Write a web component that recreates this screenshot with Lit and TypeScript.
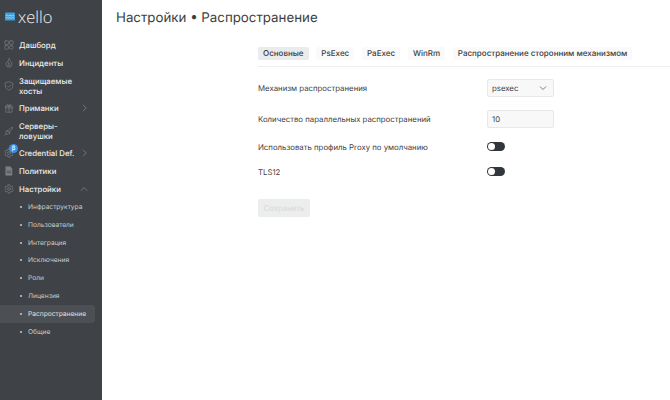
import { LitElement, html, css, svg } from "lit";
import { customElement } from "lit/decorators.js";

const s = (c: unknown) => html`<svg class="ic" viewBox="0 0 12 12" fill="none" stroke="#7c8084" stroke-width="0.8" stroke-linecap="round" stroke-linejoin="round">${c}</svg>`;
const icons: Record<string, unknown> = {
  dash: s(svg`<rect x="1" y="1" width="4.300" height="4.300" rx=".8"/><rect x="6.700" y="1" width="4.300" height="4.300" rx=".8"/><rect x="1" y="6.700" width="4.300" height="4.300" rx=".8"/><rect x="6.700" y="6.700" width="4.300" height="4.300" rx="2.100"/>`),
  fire: s(svg`<path d="M6 1C6.500 3 9.500 4.500 9.500 7.500A3.500 3.500 0 0 1 2.500 7.500C2.500 6 3.300 5 4 4.300C4.300 5 4.800 5.300 5 5.300C5 4 5.200 2.300 6 1Z"/><path d="M6 6.500C6.800 7.300 7.200 8 7 8.800A1.100 1.100 0 0 1 5 8.800C4.800 8 5.300 7.200 6 6.500Z"/>`),
  shield: s(svg`<path d="M6 1L10.500 2.500V6C10.500 8.500 8.500 10.300 6 11C3.500 10.300 1.500 8.500 1.500 6V2.500Z"/><path d="M4 6L5.500 7.500L8 4.800"/>`),
  gift: s(svg`<rect x="1.500" y="4" width="9" height="2" rx=".4"/><path d="M2.300 6V11H9.700V6M6 4V11M6 4C4.500 4 3.300 3.300 3.500 2C3.800 .9 5.500 1.300 6 4C6.500 1.300 8.200 .9 8.500 2C8.700 3.300 7.500 4 6 4Z"/>`),
  server: s(svg`<path d="M2 8L8 2.500L10.500 1.500L9.500 4L4 10ZM2.500 5.500L5 6M6.500 7L6.500 9.500M1 11L2.500 9.500"/>`),
  gear: s(svg`<circle cx="6" cy="6" r="1.700"/><path d="M5 1H7L7.300 2.500L8.600 3.200L10 2.700L11 4.400L9.900 5.400V6.600L11 7.600L10 9.300L8.600 8.800L7.300 9.500L7 11H5L4.700 9.500L3.400 8.800L2 9.300L1 7.600L2.100 6.600V5.400L1 4.400L2 2.700L3.400 3.200L4.700 2.500Z"/>`),
  doc: s(svg`<path d="M2.500 1H7.500L9.500 3V11H2.500Z" fill="#7c8084"/><path d="M4 6H8M4 8H8" stroke="#3f4347"/>`),
};
const chev = (up = false) => html`<svg class="chev" viewBox="0 0 8 8" fill="none" stroke="#7f8387" stroke-width=".8" stroke-linecap="round" stroke-linejoin="round">${up ? svg`<path d="M1 5.500L4 2.500L7 5.500"/>` : svg`<path d="M3.200 1L6.200 4L3.200 7"/>`}</svg>`;

const top = [
  { i: "dash", t: "Дашборд" },
  { i: "fire", t: "Инциденты" },
  { i: "shield", t: "Защищаемые хосты", two: true },
  { i: "gift", t: "Приманки", c: true },
  { i: "server", t: "Серверы-ловушки", two: true },
  { i: "gear", t: "Credential Def.", c: true, beta: true },
  { i: "doc", t: "Политики" },
  { i: "gear", t: "Настройки", up: true },
];
const subs = ["Инфраструктура", "Пользователи", "Интеграция", "Исключения", "Роли", "Лицензия", "Распространение", "Общие"];
const tabs = ["Основные", "PsExec", "PaExec", "WinRm", "Распространение сторонним механизмом"];

@customElement("app-root")
export class AppRoot extends LitElement {
  static styles = css`
    :host { display: flex; width: 670px; height: 400px; overflow: hidden; font-family: Inter, "Noto Sans", sans-serif; background: #fff; color: #3a3d40; text-rendering: geometricPrecision; }
    .side { width: 102px; flex: none; background: #3f4347; display: flex; flex-direction: column; box-sizing: border-box; padding-top: 5px; }
    .logo { display: flex; align-items: center; gap: 3px; padding-left: 5px; height: 22px; margin-bottom: 9px; color: #f2f3f4; font-family: "Open Sans", Inter, sans-serif; font-size: 16.500px; font-weight: 300; }
    .logo svg { width: 10px; height: 9px; flex: none; }
    .item { display: flex; align-items: center; position: relative; padding: 0 0 0 4px; min-height: 18px; font-size: 7.800px; line-height: 10px; color: #eceded; font-weight: 500; }
    .item.two { min-height: 27px; }
    .ic { width: 10px; height: 10px; flex: none; }
    .item .t { margin-left: 5px; width: 57px; flex: none; }
    .chev { width: 8px; height: 8px; flex: none; margin-left: 4px; }
    .beta { position: absolute; left: 9px; top: 0; width: 9px; height: 9px; border-radius: 50%; background: #3b8ee8; color: #fff; font-size: 6px; line-height: 9px; text-align: center; }
    .sub { display: flex; align-items: center; height: 17.850px; font-size: 6.650px; color: #c9cbcd; padding-left: 20px; gap: 6px; font-weight: 400; width: 95px; box-sizing: border-box; }
    .sub.on { background: #4c5054; border-radius: 0 3px 3px 0; color: #e0e1e2; }
    .sub i { width: 2px; height: 2px; border-radius: 50%; background: #c9cbcd; flex: none; }
    .main { flex: 1; min-width: 0; display: flex; flex-direction: column; padding: 10px 0 0 14px; }
    h1 { margin: 0; font-size: 13.300px; line-height: 16px; font-weight: 400; color: #3c3f42; height: 37px; }
    .content { margin-left: 142px; display: flex; flex-direction: column; }
    .tabs { display: flex; gap: 7.800px; padding-bottom: 6px; border-bottom: 1px solid #eeeef2; }
    .tab { font-size: 8px; font-weight: 500; height: 13px; line-height: 13px; padding: 0 5px; background: #fafafa; border-radius: 2px; white-space: nowrap; color: #3a3d40; }
    .tab.on { background: #eaebec; }
    .row { display: flex; align-items: center; font-size: 7.800px; color: #3f4245; height: 31px; }
    .row.first { margin-top: 5px; }
    .row.sw { height: 25px; }
    .lab { width: 229px; flex: none; }
    .field { width: 67px; height: 18px; box-sizing: border-box; border: 1px solid #e7e8e9; background: #f8f8f9; border-radius: 2px; display: flex; align-items: center; justify-content: space-between; padding: 0 6px 0 4px; font-size: 7.800px; color: #3f4245; }
    .field svg { width: 8px; height: 6px; }
    .toggle { width: 18px; height: 9px; border-radius: 5px; background: #33363a; position: relative; }
    .toggle::after { content: ""; position: absolute; left: 1px; top: 1px; width: 7px; height: 7px; border-radius: 50%; background: #fff; }
    .save { margin-top: 15px; width: 52px; height: 18px; border-radius: 2px; background: #eceded; color: #d7d8da; font-size: 7.800px; line-height: 18px; text-align: center; }
  `;
  render() {
    return html`
      <nav class="side">
        <div class="logo">
          <svg viewBox="0 0 11 9"><rect width="11" height="9" rx="1" fill="#3f9fdc"/><path d="M1 4l1.500-1 1.500 1 1.500-1 1.500 1 1.500-1 1.500 1M1 6.500l1.500-1 1.500 1 1.500-1 1.500 1 1.500-1 1.500 1" stroke="#d8ecf8" stroke-width=".7" fill="none"/></svg>
          <span>xello</span>
        </div>
        ${top.map((m) => html`<div class="item ${m.two ? "two" : ""}">
          ${icons[m.i]}<span class="t">${m.t}</span>
          ${m.c ? chev() : ""}${m.up ? chev(true) : ""}
          ${m.beta ? html`<span class="beta">β</span>` : ""}
        </div>`)}
        ${subs.map((x) => html`<div class="sub ${x === "Распространение" ? "on" : ""}"><i></i><span>${x}</span></div>`)}
      </nav>
      <main class="main">
        <h1>Настройки • Распространение</h1>
        <div class="content">
          <div class="tabs">${tabs.map((t, i) => html`<div class="tab ${i === 0 ? "on" : ""}">${t}</div>`)}</div>
          <div class="row first"><span class="lab">Механизм распространения</span>
            <div class="field"><span>psexec</span><svg viewBox="0 0 8 6" fill="none" stroke="#55585b" stroke-width=".8"><path d="M1 1.500L4 4.500L7 1.500"/></svg></div></div>
          <div class="row"><span class="lab">Количество параллельных распространений</span><div class="field"><span>10</span></div></div>
          <div class="row sw"><span class="lab">Использовать профиль Proxy по умолчанию</span><div class="toggle"></div></div>
          <div class="row sw"><span class="lab">TLS12</span><div class="toggle"></div></div>
          <div class="save">Сохранить</div>
        </div>
      </main>
    `;
  }
}
